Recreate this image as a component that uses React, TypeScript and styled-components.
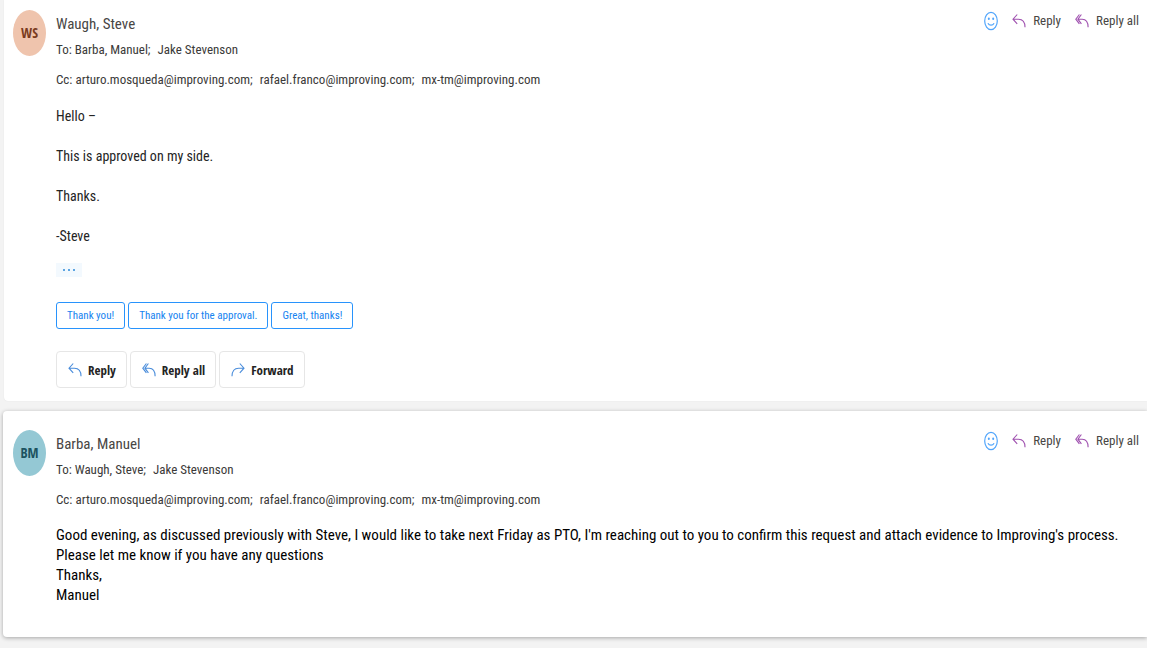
import React from "react";
import styled, { createGlobalStyle } from "styled-components";

const uiFont = `"Roboto Condensed", "Noto Sans", sans-serif`;
const strongFont = `"Open Sans Condensed", "Roboto Condensed", sans-serif`;

const GlobalStyle = createGlobalStyle`
  * { box-sizing: border-box; }
  body { margin: 0; background: #fff; font-family: ${uiFont}; color: #3b3a39; }
  p { margin: 0; }
`;

const Thread = styled.main`
  display: flex;
  flex-direction: column;
  gap: 10px;
  min-height: 100vh;
  margin-right: 5px;
  padding: 0 0 10px 3px;
  background: #f3f3f3;
  overflow: hidden;
`;

const Card = styled.article<{ $raised?: boolean }>`
  display: grid;
  grid-template-columns: 33px minmax(0, 1fr);
  column-gap: 10px;
  align-items: start;
  padding: ${(p) => (p.$raised ? "19px 8px 32px 10px" : "10px 8px 13px 9px")};
  margin-left: ${(p) => (p.$raised ? "0" : "1px")};
  background: #fff;
  border-radius: ${(p) => (p.$raised ? "4px 0 0 4px" : "0 0 0 4px")};
  box-shadow: ${(p) => (p.$raised ? "0 1px 4px rgba(0, 0, 0, 0.32)" : "0 0 1px rgba(0, 0, 0, 0.12)")};
`;

const Avatar = styled.div<{ $bg: string; $fg: string }>`
  display: flex;
  align-items: center;
  justify-content: center;
  height: 46px;
  border-radius: 50%;
  background: ${(p) => p.$bg};
  color: ${(p) => p.$fg};
  font-family: ${strongFont};
  font-size: 14px;
  line-height: 18px;
  font-weight: 600;
`;

const Header = styled.header`
  display: flex;
  justify-content: space-between;
  align-items: flex-start;
`;

const Name = styled.h2`
  margin: 0;
  padding-top: 2px;
  font-size: 15px;
  line-height: 24px;
  font-weight: 400;
  color: #484644;
`;

const Actions = styled.div`
  display: flex;
  align-items: center;
  height: 22px;
  gap: 14px;
`;

const PlainButton = styled.button`
  display: flex;
  align-items: center;
  gap: 7px;
  padding: 0;
  border: 0;
  background: none;
  font-family: inherit;
  font-size: 13px;
  line-height: 20px;
  color: #484644;
  white-space: nowrap;
`;

const Recipients = styled.p`
  display: flex;
  gap: 7px;
  font-size: 13px;
  line-height: 28px;
  white-space: nowrap;
  & + & { line-height: 32px; }
`;

const Label = styled.span`
  margin-right: -4px;
`;

const Message = styled.div<{ $spaced?: boolean }>`
  display: flex;
  flex-direction: column;
  gap: ${(p) => (p.$spaced ? "20px" : "0")};
  margin-top: ${(p) => (p.$spaced ? "10px" : "9px")};
  font-size: ${(p) => (p.$spaced ? "14px" : "15px")};
  line-height: 20px;
  color: ${(p) => (p.$spaced ? "#242424" : "#000")};
`;

const More = styled.button`
  display: flex;
  align-items: center;
  justify-content: center;
  width: 26px;
  height: 14px;
  margin-top: 17px;
  padding: 0;
  border: 0;
  background: #f3f9fe;
`;

const ButtonRow = styled.div<{ $top: number }>`
  display: flex;
  gap: 3px;
  margin-top: ${(p) => p.$top}px;
`;

const Suggestion = styled.button`
  height: 27px;
  padding: 0 10px;
  border: 1px solid #2893fc;
  border-radius: 3px;
  background: #fff;
  font-family: inherit;
  font-size: 11px;
  color: #1683f0;
  white-space: nowrap;
`;

const Respond = styled.button`
  display: flex;
  align-items: center;
  gap: 6px;
  height: 37px;
  padding: 0 10px 0 11px;
  border: 1px solid #e6e6e6;
  border-radius: 4px;
  background: #fff;
  font-family: ${strongFont};
  font-size: 13px;
  font-weight: 600;
  color: #242424;
  white-space: nowrap;
`;

type IconProps = { color: string };

const ReplyIcon = ({ color }: IconProps) => (
  <svg width="14" height="16" viewBox="0 0 14 16" fill="none" stroke={color} strokeWidth="1.1" aria-hidden="true">
    <path d="M5.2 1.5 1 6.2l4.2 4.7M1.2 6.2h5.3c4 0 6.5 2.8 6.5 8" />
  </svg>
);

const ReplyAllIcon = ({ color }: IconProps) => (
  <svg width="14" height="16" viewBox="0 0 14 16" fill="none" stroke={color} strokeWidth="1.1" aria-hidden="true">
    <path d="M4.4 1.5.8 6.2l3.6 4.7M6.4 1.5 2.9 6.2l3.5 4.7M3 6.2h4.2c3.7 0 5.9 2.9 5.9 8" />
  </svg>
);

const ForwardIcon = ({ color }: IconProps) => (
  <svg width="14" height="16" viewBox="0 0 14 16" fill="none" stroke={color} strokeWidth="1.1" aria-hidden="true">
    <path d="M8.8 1.5 13 6.2l-4.2 4.7M12.8 6.2H7.5C3.5 6.2 1 9 1 14.2" />
  </svg>
);

const SmileIcon = () => (
  <svg width="14" height="20" viewBox="0 0 14 20" fill="none" stroke="#51a5fb" strokeWidth="1.2" aria-hidden="true">
    <ellipse cx="7" cy="10" rx="6.3" ry="8.6" />
    <path d="M3.900 12.300c1.400 2.500 4.800 2.500 6.200 0" />
    <ellipse cx="4.800" cy="7.800" rx="1" ry="1.200" fill="#51a5fb" stroke="none" />
    <ellipse cx="9.200" cy="7.800" rx="1" ry="1.200" fill="#51a5fb" stroke="none" />
  </svg>
);

const DotsIcon = () => (
  <svg width="14" height="4" viewBox="0 0 14 4" fill="#2b88d8" aria-hidden="true">
    <circle cx="2" cy="2" r="1" />
    <circle cx="7" cy="2" r="1" />
    <circle cx="12" cy="2" r="1" />
  </svg>
);

const purple = "#a052b0";
const blue = "#4a8ddb";
const cc = ["arturo.mosqueda@improving.com;", "rafael.franco@improving.com;", "mx-tm@improving.com"];

const MessageHeader = ({ name, to }: { name: string; to: string[] }) => (
  <>
    <Header>
      <Name>{name}</Name>
      <Actions>
        <PlainButton aria-label="React"><SmileIcon /></PlainButton>
        <PlainButton><ReplyIcon color={purple} />Reply</PlainButton>
        <PlainButton><ReplyAllIcon color={purple} />Reply all</PlainButton>
      </Actions>
    </Header>
    <Recipients>
      <Label>To:</Label>
      {to.map((person) => <span key={person}>{person}</span>)}
    </Recipients>
    <Recipients>
      <Label>Cc:</Label>
      {cc.map((person) => <span key={person}>{person}</span>)}
    </Recipients>
  </>
);

export default function App() {
  return (
    <>
      <GlobalStyle />
      <Thread>
        <Card>
          <Avatar $bg="#efc4ad" $fg="#7a3b20">WS</Avatar>
          <div>
            <MessageHeader name="Waugh, Steve" to={["Barba, Manuel;", "Jake Stevenson"]} />
            <Message $spaced>
              <p>Hello –</p>
              <p>This is approved on my side.</p>
              <p>Thanks.</p>
              <p>-Steve</p>
            </Message>
            <More aria-label="Show trimmed content"><DotsIcon /></More>
            <ButtonRow $top={25}>
              <Suggestion>Thank you!</Suggestion>
              <Suggestion>Thank you for the approval.</Suggestion>
              <Suggestion>Great, thanks!</Suggestion>
            </ButtonRow>
            <ButtonRow $top={22}>
              <Respond><ReplyIcon color={blue} />Reply</Respond>
              <Respond><ReplyAllIcon color={blue} />Reply all</Respond>
              <Respond><ForwardIcon color={blue} />Forward</Respond>
            </ButtonRow>
          </div>
        </Card>
        <Card $raised>
          <Avatar $bg="#94c8d4" $fg="#1c5360">BM</Avatar>
          <div>
            <MessageHeader name="Barba, Manuel" to={["Waugh, Steve;", "Jake Stevenson"]} />
            <Message>
              <p>
                Good evening, as discussed previously with Steve, I would like to take next Friday as PTO, I'm reaching out
                to you to confirm this request and attach evidence to Improving's process.
              </p>
              <p>Please let me know if you have any questions</p>
              <p>Thanks,</p>
              <p>Manuel</p>
            </Message>
          </div>
        </Card>
      </Thread>
    </>
  );
}
